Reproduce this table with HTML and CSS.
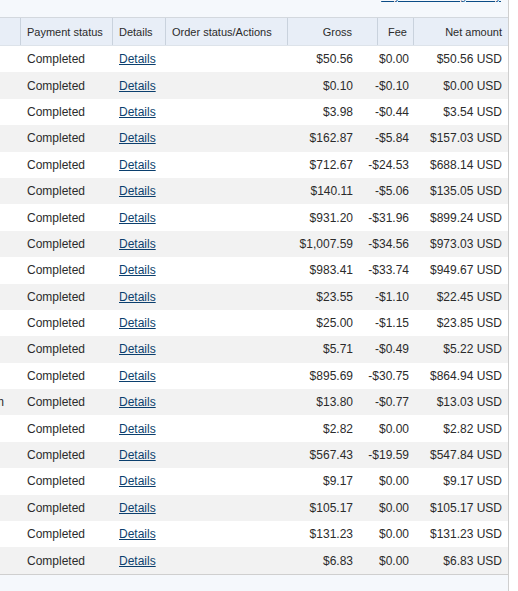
FILE: index.html
```html
<!DOCTYPE html>
<html>
<head>
<meta charset="utf-8">
<link rel="stylesheet" href="styles.css">
</head>
<body>
<div class="panel">
  <div class="top"><a class="glossary" href="#">Payment status glossary</a></div>
  <div class="head">
    <div class="hc lead"></div>
    <div class="hc">Payment status</div>
    <div class="hc">Details</div>
    <div class="hc">Order status/Actions</div>
    <div class="hc num gross">Gross</div>
    <div class="hc num">Fee</div>
    <div class="hc num">Net amount</div>
  </div>
  <div class="rows">
    <div class="row"><div class="c lead"></div><div class="c">Completed</div><div class="c"><a href="#">Details</a></div><div class="c"></div><div class="c num">$50.56</div><div class="c num">$0.00</div><div class="c num">$50.56 USD</div></div>
    <div class="row"><div class="c lead"></div><div class="c">Completed</div><div class="c"><a href="#">Details</a></div><div class="c"></div><div class="c num">$0.10</div><div class="c num">-$0.10</div><div class="c num">$0.00 USD</div></div>
    <div class="row"><div class="c lead"></div><div class="c">Completed</div><div class="c"><a href="#">Details</a></div><div class="c"></div><div class="c num">$3.98</div><div class="c num">-$0.44</div><div class="c num">$3.54 USD</div></div>
    <div class="row"><div class="c lead"></div><div class="c">Completed</div><div class="c"><a href="#">Details</a></div><div class="c"></div><div class="c num">$162.87</div><div class="c num">-$5.84</div><div class="c num">$157.03 USD</div></div>
    <div class="row"><div class="c lead"></div><div class="c">Completed</div><div class="c"><a href="#">Details</a></div><div class="c"></div><div class="c num">$712.67</div><div class="c num">-$24.53</div><div class="c num">$688.14 USD</div></div>
    <div class="row"><div class="c lead"></div><div class="c">Completed</div><div class="c"><a href="#">Details</a></div><div class="c"></div><div class="c num">$140.11</div><div class="c num">-$5.06</div><div class="c num">$135.05 USD</div></div>
    <div class="row"><div class="c lead"></div><div class="c">Completed</div><div class="c"><a href="#">Details</a></div><div class="c"></div><div class="c num">$931.20</div><div class="c num">-$31.96</div><div class="c num">$899.24 USD</div></div>
    <div class="row"><div class="c lead"></div><div class="c">Completed</div><div class="c"><a href="#">Details</a></div><div class="c"></div><div class="c num">$1,007.59</div><div class="c num">-$34.56</div><div class="c num">$973.03 USD</div></div>
    <div class="row"><div class="c lead"></div><div class="c">Completed</div><div class="c"><a href="#">Details</a></div><div class="c"></div><div class="c num">$983.41</div><div class="c num">-$33.74</div><div class="c num">$949.67 USD</div></div>
    <div class="row"><div class="c lead"></div><div class="c">Completed</div><div class="c"><a href="#">Details</a></div><div class="c"></div><div class="c num">$23.55</div><div class="c num">-$1.10</div><div class="c num">$22.45 USD</div></div>
    <div class="row"><div class="c lead"></div><div class="c">Completed</div><div class="c"><a href="#">Details</a></div><div class="c"></div><div class="c num">$25.00</div><div class="c num">-$1.15</div><div class="c num">$23.85 USD</div></div>
    <div class="row"><div class="c lead"></div><div class="c">Completed</div><div class="c"><a href="#">Details</a></div><div class="c"></div><div class="c num">$5.71</div><div class="c num">-$0.49</div><div class="c num">$5.22 USD</div></div>
    <div class="row"><div class="c lead"></div><div class="c">Completed</div><div class="c"><a href="#">Details</a></div><div class="c"></div><div class="c num">$895.69</div><div class="c num">-$30.75</div><div class="c num">$864.94 USD</div></div>
    <div class="row"><div class="c lead cut"><span>Payment from</span></div><div class="c">Completed</div><div class="c"><a href="#">Details</a></div><div class="c"></div><div class="c num">$13.80</div><div class="c num">-$0.77</div><div class="c num">$13.03 USD</div></div>
    <div class="row"><div class="c lead"></div><div class="c">Completed</div><div class="c"><a href="#">Details</a></div><div class="c"></div><div class="c num">$2.82</div><div class="c num">$0.00</div><div class="c num">$2.82 USD</div></div>
    <div class="row"><div class="c lead"></div><div class="c">Completed</div><div class="c"><a href="#">Details</a></div><div class="c"></div><div class="c num">$567.43</div><div class="c num">-$19.59</div><div class="c num">$547.84 USD</div></div>
    <div class="row"><div class="c lead"></div><div class="c">Completed</div><div class="c"><a href="#">Details</a></div><div class="c"></div><div class="c num">$9.17</div><div class="c num">$0.00</div><div class="c num">$9.17 USD</div></div>
    <div class="row"><div class="c lead"></div><div class="c">Completed</div><div class="c"><a href="#">Details</a></div><div class="c"></div><div class="c num">$105.17</div><div class="c num">$0.00</div><div class="c num">$105.17 USD</div></div>
    <div class="row"><div class="c lead"></div><div class="c">Completed</div><div class="c"><a href="#">Details</a></div><div class="c"></div><div class="c num">$131.23</div><div class="c num">$0.00</div><div class="c num">$131.23 USD</div></div>
    <div class="row"><div class="c lead"></div><div class="c">Completed</div><div class="c"><a href="#">Details</a></div><div class="c"></div><div class="c num">$6.83</div><div class="c num">$0.00</div><div class="c num">$6.83 USD</div></div>
  </div>
  <div class="bottom"></div>
</div>
</body>
</html>
```

FILE: styles.css
```css
html, body {
  margin: 0;
  padding: 0;
  background: #ffffff;
}
body {
  font-family: "Liberation Sans", Arial, sans-serif;
  color: #2b2b2b;
  height: 591px;
  overflow: hidden;
}
.panel {
  width: 508px;
  height: 591px;
  border-right: 1px solid #cfcfcf;
  background: #f5f8fc;
  display: flex;
  flex-direction: column;
}
.top {
  height: 17px;
  display: flex;
  justify-content: flex-end;
  align-items: flex-start;
  padding-right: 7px;
  overflow: hidden;
}
.glossary {
  font-size: 11px;
  line-height: 13px;
  margin-top: -10px;
  color: #0b4c86;
}
.head {
  display: grid;
  grid-template-columns: 21px 92px 53px 122px 90px 36px 94px;
  height: 27px;
  border-top: 1px solid #d3d8de;
  border-bottom: 1px solid #dde3ea;
  background: #e8eef7;
  font-size: 11px;
}
.hc {
  display: flex;
  align-items: center;
  padding: 0 6px;
  border-right: 1px solid #c9d2dd;
  white-space: nowrap;
  overflow: hidden;
}
.hc:last-child {
  border-right: none;
}
.hc.lead {
  padding: 0;
}
.hc.num {
  justify-content: flex-end;
}
.hc.gross {
  padding-right: 25px;
}
.rows {
  display: flex;
  flex-direction: column;
  background: #ffffff;
  border-bottom: 1px solid #cfcfcf;
}
.row {
  display: grid;
  grid-template-columns: 21px 92px 53px 122px 71px 56px 93px;
  height: 26.4px;
  font-size: 12px;
}
.row:nth-child(even) {
  background: #f2f2f2;
}
.c {
  display: flex;
  align-items: center;
  padding: 0 6px;
  white-space: nowrap;
}
.c.num {
  justify-content: flex-end;
}
.c.lead {
  padding: 0;
}
.c.cut {
  overflow: hidden;
  justify-content: flex-end;
  padding-right: 17px;
}
.c a {
  color: #0b3f6e;
  text-decoration: underline;
}
.bottom {
  flex: 1;
}
```
